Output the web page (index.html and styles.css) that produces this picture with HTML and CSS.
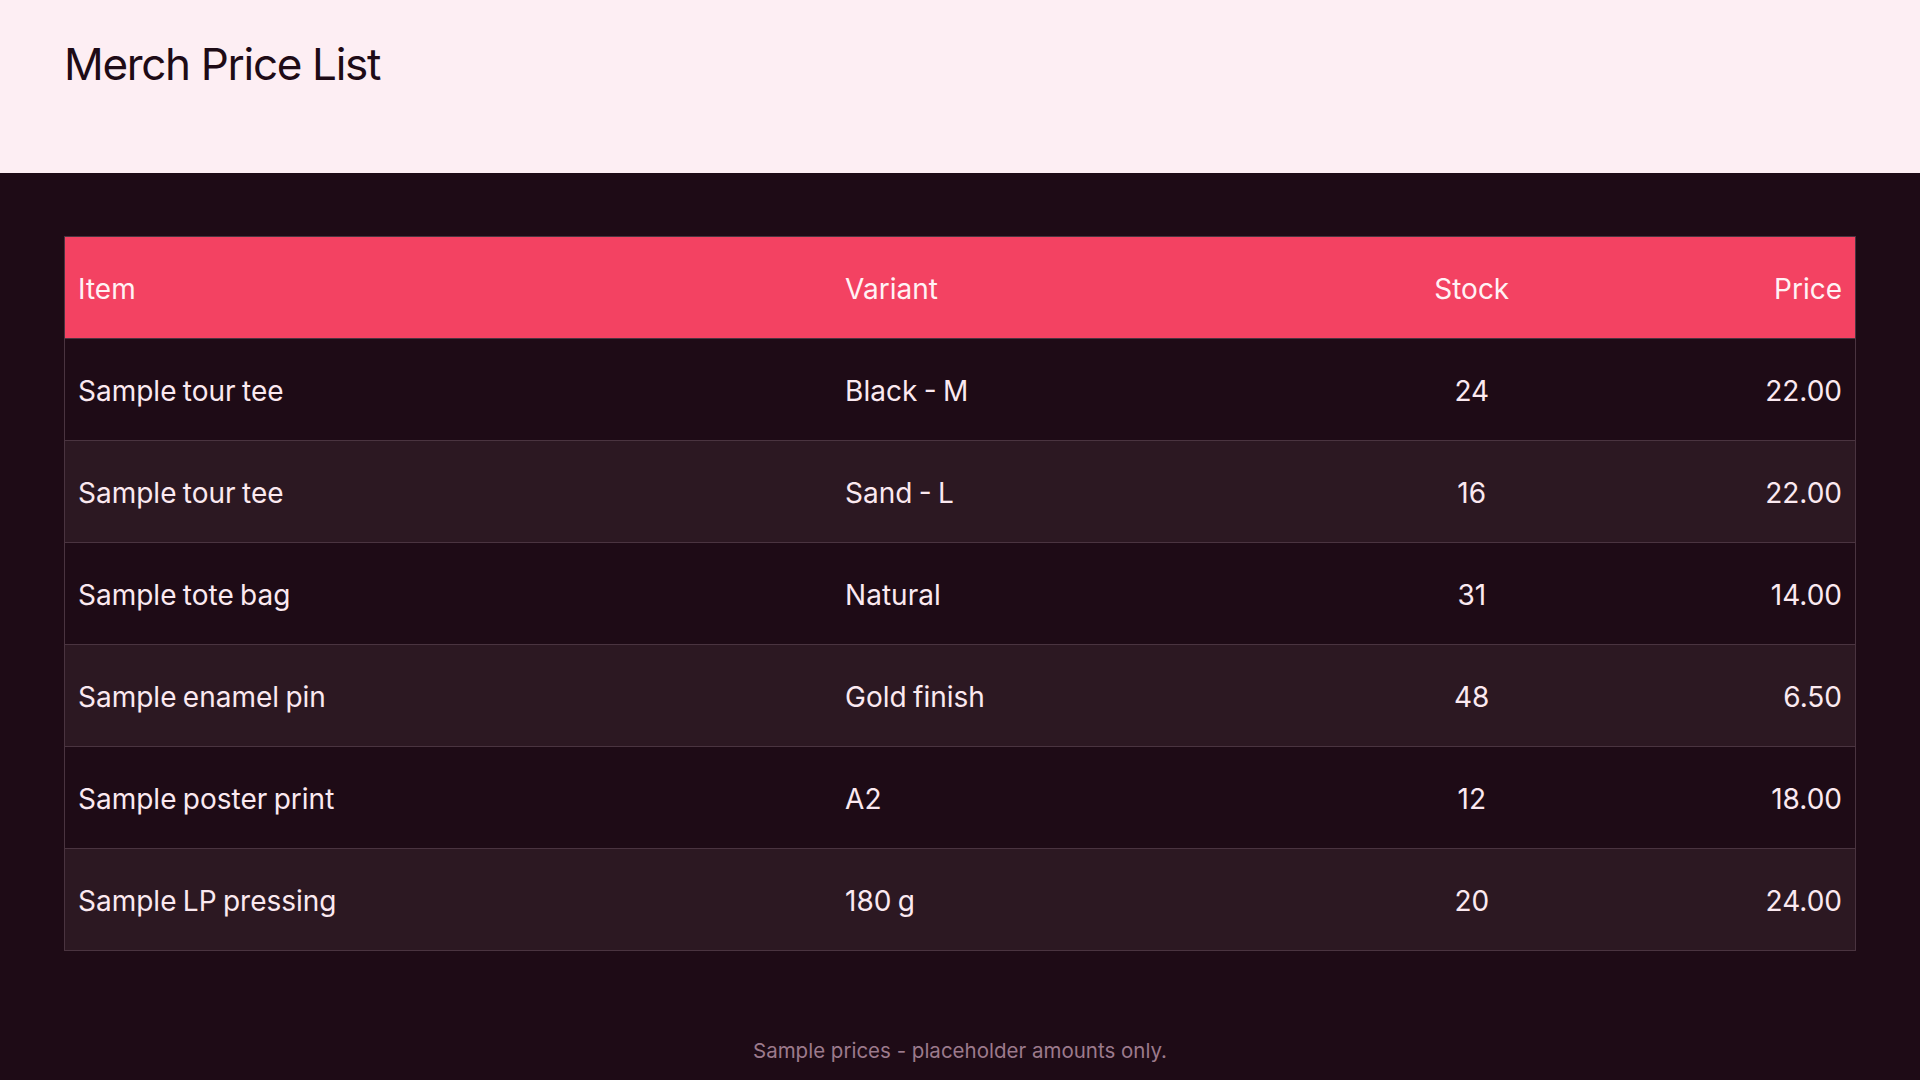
FILE: index.html
```html
<!DOCTYPE html>
<html lang="en">
<head>
<meta charset="utf-8">
<title>Merch Price List</title>
<link rel="stylesheet" href="styles.css">
</head>
<body>
<header class="top">
  <h1 class="title">Merch Price List</h1>
</header>
<main class="content">
  <table class="prices">
    <colgroup>
      <col class="c-item"><col class="c-variant"><col class="c-stock"><col class="c-price">
    </colgroup>
    <thead>
      <tr><th class="left">Item</th><th class="left">Variant</th><th class="center">Stock</th><th class="right">Price</th></tr>
    </thead>
    <tbody>
      <tr><td>Sample tour tee</td><td>Black - M</td><td class="center">24</td><td class="right">22.00</td></tr>
      <tr><td>Sample tour tee</td><td>Sand - L</td><td class="center">16</td><td class="right">22.00</td></tr>
      <tr><td>Sample tote bag</td><td>Natural</td><td class="center">31</td><td class="right">14.00</td></tr>
      <tr><td>Sample enamel pin</td><td>Gold finish</td><td class="center">48</td><td class="right">6.50</td></tr>
      <tr><td>Sample poster print</td><td>A2</td><td class="center">12</td><td class="right">18.00</td></tr>
      <tr><td>Sample LP pressing</td><td>180 g</td><td class="center">20</td><td class="right">24.00</td></tr>
    </tbody>
  </table>
  <p class="note">Sample prices - placeholder amounts only.</p>
</main>
</body>
</html>
```

FILE: styles.css
```css
* { box-sizing: border-box; }
html, body { margin: 0; padding: 0; }
body {
  font-family: Inter, "Noto Sans", "Liberation Sans", sans-serif;
  background: #1e0b16;
  color: #fbe9f0;
  height: 1080px;
  display: flex;
  flex-direction: column;
}
.top {
  background: #fdeef3;
  height: 173px;
  padding: 0 64px;
  flex: none;
}
.title {
  margin: 0;
  padding-top: 36px;
  font-size: 44px;
  font-weight: 400;
  line-height: 56px;
  letter-spacing: -0.03em;
  color: #1e0b16;
}
.content {
  flex: 1;
  display: flex;
  flex-direction: column;
  padding: 63px 64px 0;
}
.prices {
  width: 100%;
  border-collapse: collapse;
  table-layout: fixed;
  border: 1px solid #4a3440;
  font-size: 28px;
  word-spacing: -1.5px;
}
.c-item { width: 42.86%; }
.c-variant { width: 29.02%; }
.c-stock { width: 13.39%; }
.c-price { width: 14.73%; }
.prices th, .prices td {
  padding: 2px 13px 0;
  height: 102px;
  font-weight: 400;
  text-align: left;
  vertical-align: middle;
}
.prices thead th {
  background: #f34262;
  color: #fff2f5;
}
.prices tbody tr { border-top: 1px solid #4a3440; }
.prices tbody tr:nth-child(odd) { background: #1e0b16; }
.prices tbody tr:nth-child(even) { background: #2c1822; }
.prices .center { text-align: center; }
.prices .right { text-align: right; }
.note {
  margin: auto 0 15px;
  text-align: center;
  font-size: 20.5px;
  line-height: 28px;
  color: #9c7a8c;
}
```
